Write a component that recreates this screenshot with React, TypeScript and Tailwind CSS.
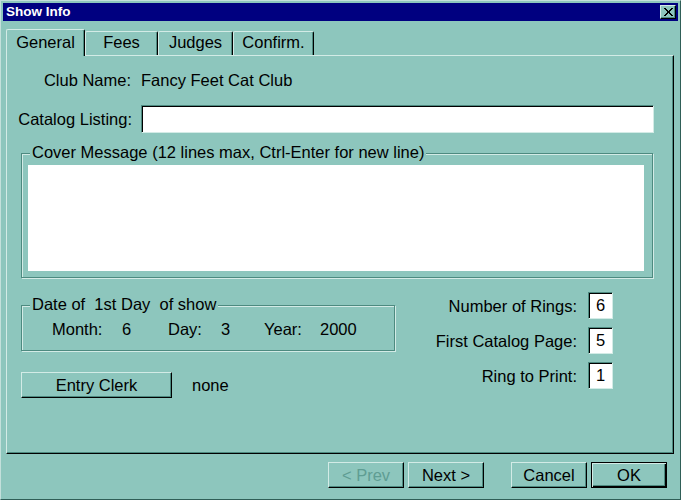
import React from 'react'

function Btn({ label, w = 'w-[76px]', disabled = false, isDefault = false, className = '' }: { label: string; w?: string; disabled?: boolean; isDefault?: boolean; className?: string }) {
  const frame = isDefault
    ? 'border border-black shadow-[inset_1px_1px_0_#d3ebe6,inset_-1px_-1px_0_#000,inset_-2px_-2px_0_#4d8a80]'
    : 'border border-t-[#d3ebe6] border-l-[#d3ebe6] border-r-black border-b-black shadow-[inset_-1px_-1px_0_#4d8a80]'
  return (
    <button
      type="button"
      className={`${w} h-[26px] ${frame} bg-[#8dc6bd] flex items-center justify-center leading-[18px] ${
        disabled ? 'text-[#5f9d93]' : 'text-black'
      } ${className}`}
    >
      {label}
    </button>
  )
}

function Group({ legend, className, children }: { legend: string; className: string; children: React.ReactNode }) {
  return (
    <div
      className={`relative border border-[#4d8a80] shadow-[1px_1px_0_#d3ebe6,inset_1px_1px_0_#d3ebe6] ${className}`}
    >
      <span className="absolute -top-[11px] left-[8px] px-[2px] bg-[#8dc6bd] leading-[18px] whitespace-pre">
        {legend}
      </span>
      {children}
    </div>
  )
}

const sunken =
  'border border-t-[#4d8a80] border-l-[#4d8a80] border-r-[#d3ebe6] border-b-[#d3ebe6] shadow-[inset_1px_1px_0_#000] bg-white outline-none'

function NumField({ label, value }: { label: string; value: string }) {
  return (
    <div className="flex items-center justify-end gap-[11px] h-[27px]">
      <span className="leading-[18px]">{label}</span>
      <input readOnly value={value} className={`w-[25px] h-[27px] text-center ${sunken}`} />
    </div>
  )
}

export default function App() {
  const tabs = [
    { name: 'Fees', w: 'w-[73px]' },
    { name: 'Judges', w: 'w-[75px]' },
    { name: 'Confirm.', w: 'w-[81px]' },
  ]

  return (
    <div className="w-[681px] h-[500px] bg-[#8dc6bd] border border-t-[#c3e0db] border-l-[#c3e0db] border-r-[#2f5e57] border-b-[#2f5e57] p-[2px] flex flex-col font-['Liberation_Sans',Arial,sans-serif] text-[16.5px] leading-[18px] text-black">
      {/* title bar */}
      <div className="h-[18px] bg-[#000080] flex items-center justify-between pl-[3px] pr-[2px]">
        <span className="text-white font-bold text-[13.5px] leading-none">Show Info</span>
        <button
          type="button"
          aria-label="Close"
          className="w-[16px] h-[14px] flex items-center justify-center bg-[#8dc6bd] border border-t-[#d3ebe6] border-l-[#d3ebe6] border-r-black border-b-black shadow-[inset_-1px_-1px_0_#4d8a80]"
        >
          <svg width="9" height="8" viewBox="0 0 9 8" shapeRendering="crispEdges">
            <path d="M0 0h2v1h-2zM7 0h2v1h-2zM1 1h2v1h-2zM6 1h2v1h-2zM2 2h2v1h-2zM5 2h2v1h-2zM3 3h3v2h-3zM2 5h2v1h-2zM5 5h2v1h-2zM1 6h2v1h-2zM6 6h2v1h-2zM0 7h2v1h-2zM7 7h2v1h-2z" fill="#000" />
          </svg>
        </button>
      </div>

      {/* tabs */}
      <div className="mt-[8px] ml-[3px] flex items-end h-[26px]">
        <div className="relative z-10 w-[79px] h-[27px] -mb-[1px] bg-[#8dc6bd] border-t border-l border-r border-t-[#d3ebe6] border-l-[#d3ebe6] border-r-black rounded-t-[2px] shadow-[inset_-1px_0_0_#4d8a80] pt-[3px] text-center">
          General
        </div>
        {tabs.map((t) => (
          <div
            key={t.name}
            className={`${t.w} h-[24px] bg-[#8dc6bd] border-t border-l border-r border-t-[#d3ebe6] border-l-[#d3ebe6] border-r-black rounded-t-[2px] shadow-[inset_-1px_0_0_#4d8a80] pt-[1px] text-center`}
          >
            {t.name}
          </div>
        ))}
      </div>

      {/* panel */}
      <div className="ml-[3px] w-[668px] h-[399px] border border-t-[#d3ebe6] border-l-[#d3ebe6] border-r-black border-b-black shadow-[inset_-1px_-1px_0_#4d8a80] flex flex-col">
        <div className="mt-[15px] flex">
          <div className="w-[134px] text-right pr-[10px]">Club Name:</div>
          <div>Fancy Feet Cat Club</div>
        </div>

        <div className="mt-[16px] flex items-center">
          <div className="w-[134px] text-right pr-[9px]">Catalog Listing:</div>
          <input readOnly className={`w-[513px] h-[28px] px-[4px] ${sunken}`} />
        </div>

        <Group legend="Cover Message (12 lines max, Ctrl-Enter for new line)" className="mt-[20px] ml-[14px] w-[632px] pt-[11px] pl-[6px] pb-[6px]">
          <textarea readOnly className="block w-[616px] h-[106px] bg-white resize-none outline-none" />
        </Group>

        <div className="flex ml-[14px]">
          <div className="mt-[27px] flex flex-col">
            <Group legend="Date of  1st Day  of show" className="w-[374px] h-[46px] pt-[14px] pl-[30px]">
              <div className="flex">
                <span className="w-[70px]">Month:</span>
                <span className="w-[46px]">6</span>
                <span className="w-[53px]">Day:</span>
                <span className="w-[43px]">3</span>
                <span className="w-[56px]">Year:</span>
                <span>2000</span>
              </div>
            </Group>
            <div className="mt-[21px] flex items-center">
              <Btn label="Entry Clerk" w="w-[151px]" />
              <span className="ml-[20px]">none</span>
            </div>
          </div>

          <div className="ml-auto mr-[60px] mt-[14px] flex flex-col gap-[8px]">
            <NumField label="Number of Rings:" value="6" />
            <NumField label="First Catalog Page:" value="5" />
            <NumField label="Ring to Print:" value="1" />
          </div>
        </div>
      </div>

      {/* dialog buttons */}
      <div className="mt-[8px] flex justify-end pr-[11px]">
        <Btn label="< Prev" disabled />
        <Btn label="Next >" className="ml-[4px]" />
        <Btn label="Cancel" className="ml-[27px]" />
        <Btn label="OK" isDefault className="ml-[4px]" />
      </div>
    </div>
  )
}
